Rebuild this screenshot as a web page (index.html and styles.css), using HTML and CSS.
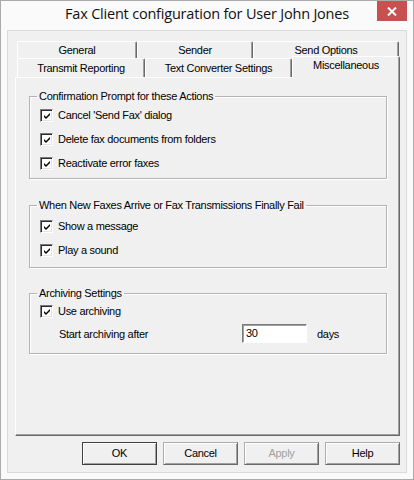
FILE: index.html
```html
<!DOCTYPE html>
<html lang="en">
<head>
    <meta charset="UTF-8">
    <meta name="viewport" content="width=device-width, initial-scale=1.0">
    <title>Fax Client configuration</title>
    <link rel="stylesheet" href="styles.css">
</head>
<body>
    <div class="window">
        <div class="titlebar">
            <span class="title">Fax Client configuration for User John Jones</span>
            <div class="close">
                <svg width="10" height="9" viewBox="0 0 10 9">
                    <path d="M1 0.5 L9 8.5 M9 0.5 L1 8.5" stroke="#fff" stroke-width="2"/>
                </svg>
            </div>
        </div>

        <div class="client">
            <div class="tabs">
                <div class="tab-row back">
                    <div class="tab t-general">General</div>
                    <div class="tab t-sender">Sender</div>
                    <div class="tab t-options">Send Options</div>
                </div>
                <div class="tab-row front">
                    <div class="tab t-transmit">Transmit Reporting</div>
                    <div class="tab t-converter">Text Converter Settings</div>
                    <div class="tab t-misc selected">Miscellaneous</div>
                </div>

                <div class="panel">
                    <fieldset class="group g-confirm">
                        <legend>Confirmation Prompt for these Actions</legend>
                        <label class="check"><span class="box"></span>Cancel 'Send Fax' dialog</label>
                        <label class="check"><span class="box"></span>Delete fax documents from folders</label>
                        <label class="check"><span class="box"></span>Reactivate error faxes</label>
                    </fieldset>

                    <fieldset class="group g-notify">
                        <legend>When New Faxes Arrive or Fax Transmissions Finally Fail</legend>
                        <label class="check"><span class="box"></span>Show a message</label>
                        <label class="check"><span class="box"></span>Play a sound</label>
                    </fieldset>

                    <fieldset class="group g-archive">
                        <legend>Archiving Settings</legend>
                        <label class="check"><span class="box"></span>Use archiving</label>
                        <div class="archive-row">
                            <span class="archive-label">Start archiving after</span>
                            <span class="field">30</span>
                            <span>days</span>
                        </div>
                    </fieldset>
                </div>
            </div>

            <div class="buttons">
                <div class="btn default">OK</div>
                <div class="btn">Cancel</div>
                <div class="btn disabled">Apply</div>
                <div class="btn">Help</div>
            </div>
        </div>
    </div>
</body>
</html>
```

FILE: styles.css
```css
body {
    margin: 0;
    background-color: #fff;
    font-family: "Liberation Sans", Arial, sans-serif;
    font-size: 11px;
    letter-spacing: -0.3px;
    color: #000;
}
.window {
    width: 414px;
    height: 480px;
    box-sizing: border-box;
    border: 1px solid #ababab;
    background-color: #fafafa;
    padding: 0 6px 6px 6px;
}

/* title bar */
.titlebar {
    height: 29px;
    display: grid;
    grid-template-columns: 1fr auto 1fr;
    align-items: start;
}
.title {
    grid-column: 2;
    font-family: "Open Sans", sans-serif;
    font-size: 14.5px;
    letter-spacing: -0.2px;
    line-height: 29px;
    color: #111;
    margin-top: -2px;
}
.close {
    grid-column: 3;
    justify-self: end;
    width: 30px;
    height: 20px;
    background-color: #c75050;
    display: flex;
    align-items: center;
    justify-content: center;
}

/* client area */
.client {
    height: 443px;
    box-sizing: border-box;
    border: 1px solid #dadada;
    background-color: #f0f0f0;
    padding: 10px 6px 7px 7px;
}
.tabs {
    width: 385px;
}
.tab-row {
    display: flex;
    padding-left: 2px;
}
.tab-row.back {
    height: 17px;
}
.tab-row.front {
    height: 19px;
}
.tab {
    box-sizing: border-box;
    border-top: 1px solid #fff;
    border-left: 1px solid #fff;
    border-right: 1px solid #696969;
    box-shadow: inset -1px 0 #a0a0a0;
    border-radius: 2px 2px 0 0;
    background-color: #f0f0f0;
    text-align: center;
    line-height: 16px;
}
.back .tab {
    height: 17px;
}
.front .tab {
    height: 19px;
    line-height: 18px;
}
.t-general { width: 120px; }
.t-sender { width: 116px; }
.t-options { width: 146px; }
.t-transmit { width: 128px; }
.t-converter { width: 147px; }
.tab.selected {
    width: 108px;
    height: 22px;
    margin-top: -2px;
    line-height: 16px;
    position: relative; /* sits over the panel's top edge */
    z-index: 1;
}

.panel {
    height: 359px;
    box-sizing: border-box;
    border-top: 1px solid #fff;
    border-left: 1px solid #fff;
    border-right: 1px solid #696969;
    border-bottom: 1px solid #696969;
    box-shadow: inset -1px -1px #a0a0a0;
    padding: 12px 12px 0 13px;
}

/* group boxes */
.group {
    margin: 0;
    padding: 0 0 0 10px;
    border: 1px solid #b4b4b4;
    box-shadow: inset 1px 1px #fff, 1px 1px #fff;
}
.group legend {
    padding: 0 2px;
    margin-left: -3px;
    line-height: 13px;
}
.g-confirm {
    height: 89px;
    box-sizing: border-box;
}
.g-notify {
    margin-top: 20px;
    height: 69px;
    box-sizing: border-box;
    padding-top: 2px;
}
.g-archive {
    margin-top: 19px;
    height: 67px;
    box-sizing: border-box;
}

.check {
    display: flex;
    align-items: center;
    height: 24px;
}
.g-archive .check {
    height: 22px;
}
.box {
    width: 13px;
    height: 13px;
    box-sizing: border-box;
    border-top: 1px solid #7a7a7a;
    border-left: 1px solid #7a7a7a;
    border-right: 1px solid #fff;
    border-bottom: 1px solid #fff;
    box-shadow: inset 1px 1px #2a2a2a, inset -1px -1px #e3e3e3;
    background-color: #fff;
    background-image: url("data:image/svg+xml,%3Csvg xmlns='http://www.w3.org/2000/svg' width='13' height='13'%3E%3Cpath d='M3 5 L5 7 L9 3 L9 5 L5 9 L3 7 Z' fill='%23000'/%3E%3C/svg%3E");
    margin-right: 5px;
}

.archive-row {
    display: flex;
    align-items: center;
    height: 23px;
    padding-left: 19px;
}
.archive-label {
    width: 183px;
}
.field {
    width: 65px;
    height: 19px;
    box-sizing: border-box;
    border-top: 1px solid #7a7a7a;
    border-left: 1px solid #7a7a7a;
    border-right: 1px solid #fff;
    border-bottom: 1px solid #fff;
    box-shadow: inset 1px 1px #a0a0a0;
    background-color: #fff;
    padding-left: 3px;
    line-height: 16px;
    margin-right: 10px;
}

/* dialog buttons */
.buttons {
    display: flex;
    justify-content: flex-end;
    gap: 6px;
    margin-top: 6px;
}
.btn {
    width: 75px;
    height: 23px;
    box-sizing: border-box;
    border: 1px solid #adadad;
    border-right-color: #696969;
    border-bottom-color: #696969;
    box-shadow: inset 1px 1px #fff, inset -1px -1px #a0a0a0;
    background-color: #f0f0f0;
    text-align: center;
    line-height: 20px;
}
.btn.default {
    border-color: #404040;
}
.btn.disabled {
    color: #a0a0a0;
}
```
